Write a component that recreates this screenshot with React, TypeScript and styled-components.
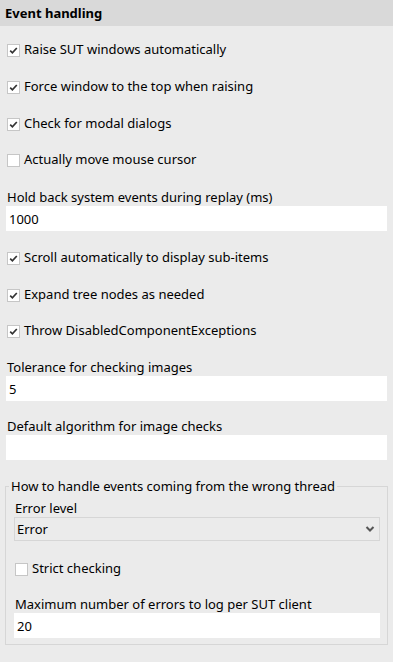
import * as React from 'react'
import styled, {createGlobalStyle} from 'styled-components'

const GlobalStyle = createGlobalStyle`
  html, body {
    margin: 0;
    padding: 0;
    background: #ebebeb;
  }
  body {
    font-family: "Noto Sans", "Open Sans", sans-serif;
    font-size: 13px;
    color: #000;
  }
`

const Panel = styled.div`
  width: 393px;
  min-height: 662px;
  background: #ebebeb;
`

const Header = styled.div`
  height: 26px;
  display: flex;
  align-items: center;
  padding-left: 5px;
  background: #d9d9d9;
  font-weight: 700;
`

const Body = styled.div`
  display: flex;
  flex-direction: column;
  padding: 0 6px 20px 6px;
`

type Spaced = {top: number}

const CheckRow = styled.label<Spaced>`
  display: flex;
  align-items: center;
  gap: 4px;
  height: 18px;
  margin-top: ${({top}) => top}px;
  padding-left: 1px;
`

const Box = styled.span`
  width: 11px;
  height: 11px;
  border: 1px solid #c6c6c6;
  background: #fff;
  display: flex;
  align-items: center;
  justify-content: center;
  margin-top: 2px;
`

const Label = styled.div<Spaced>`
  height: 18px;
  line-height: 18px;
  margin-top: ${({top}) => top}px;
  padding-left: 1px;
`

const TextField = styled.div`
  height: 25px;
  background: #fff;
  display: flex;
  align-items: center;
  padding-left: 3px;
`

const Group = styled.fieldset`
  margin: 17px -1px 0 -1px;
  padding: 0 7px 6px 8px;
  border: 1px solid #d6d6d6;
  display: flex;
  flex-direction: column;
  min-width: 0;
`

const Legend = styled.legend`
  padding: 0 2px;
  margin-left: -5px;
  line-height: 18px;
`

const Select = styled.div`
  height: 22px;
  border: 1px solid #d6d6d6;
  display: flex;
  align-items: center;
  justify-content: space-between;
  padding: 0 0 0 2px;
`

const Chevron = styled.svg`
  width: 10px;
  height: 8px;
  margin-right: 4px;
`

const Check: React.FC<{checked: boolean}> = ({checked}) => (
    <Box>
        {checked && (
            <svg width="9" height="9" viewBox="0 0 9 9">
                <path d="M1.2 4.6 L3.4 6.8 L7.8 2" fill="none" stroke="#333" strokeWidth="1.7" />
            </svg>
        )}
    </Box>
)

type CheckItemProps = {top: number; checked: boolean; text: string}

const CheckItem: React.FC<CheckItemProps> = ({top, checked, text}) => (
    <CheckRow top={top}>
        <Check checked={checked} />
        <span>{text}</span>
    </CheckRow>
)

export default function App() {
    return (
        <Panel>
            <GlobalStyle />
            <Header>Event handling</Header>
            <Body>
                <CheckItem top={14} checked text="Raise SUT windows automatically" />
                <CheckItem top={19} checked text="Force window to the top when raising" />
                <CheckItem top={19} checked text="Check for modal dialogs" />
                <CheckItem top={18} checked={false} text="Actually move mouse cursor" />
                <Label top={20}>Hold back system events during replay (ms)</Label>
                <TextField>1000</TextField>
                <CheckItem top={17} checked text="Scroll automatically to display sub-items" />
                <CheckItem top={19} checked text="Expand tree nodes as needed" />
                <CheckItem top={18} checked text="Throw DisabledComponentExceptions" />
                <Label top={19}>Tolerance for checking images</Label>
                <TextField>5</TextField>
                <Label top={16}>Default algorithm for image checks</Label>
                <TextField />
                <Group>
                    <Legend>How to handle events coming from the wrong thread</Legend>
                    <Label top={4}>Error level</Label>
                    <Select>
                        <span>Error</span>
                        <Chevron viewBox="0 0 10 8">
                            <path d="M1.5 2 L5 5.5 L8.5 2" fill="none" stroke="#555" strokeWidth="2" />
                        </Chevron>
                    </Select>
                    <CheckItem top={18} checked={false} text="Strict checking" />
                    <Label top={18}>Maximum number of errors to log per SUT client</Label>
                    <TextField>20</TextField>
                </Group>
            </Body>
        </Panel>
    )
}
